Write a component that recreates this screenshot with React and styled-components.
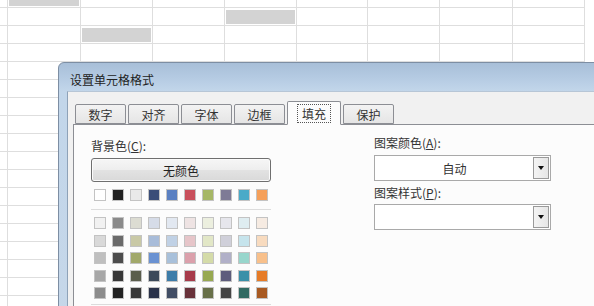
import React from 'react'
import styled, { createGlobalStyle } from 'styled-components'

const GlobalStyle = createGlobalStyle`
  html, body {
    margin: 0;
    padding: 0;
    background: #ffffff;
    overflow: hidden;
  }
  body {
    font-family: "Noto Sans CJK SC", "Liberation Sans", sans-serif;
    font-size: 12px;
    color: #333;
  }
`

const Page = styled.div`
  position: relative;
  width: 594px;
  height: 306px;
  overflow: hidden;
`

const Sheet = styled.div`
  display: grid;
  grid-template-columns: 8px 73px 72px 72px 72px 71px 72px 73px 72px;
  grid-auto-rows: 18px;
  margin-top: -10px;
`

const Cell = styled.div`
  box-sizing: border-box;
  border-right: 1px solid #dedede;
  border-bottom: 1px solid #dedede;
  padding: 2px 1px 1px 1px;
  background: ${p => (p.$selected ? '#d3d3d3' : 'transparent')};
  background-clip: content-box;
`

const Dialog = styled.div`
  position: absolute;
  left: 58px;
  top: 62px;
  width: 600px;
  height: 280px;
  box-sizing: border-box;
  border: 1px solid #7d8ea3;
  border-radius: 6px 6px 0 0;
  background: linear-gradient(#a8bfd8 0px, #b4cae2 14px, #c2d6ea 28px, #c6d7e9 100%);
  padding: 0 0 0 8px;
  display: flex;
  flex-direction: column;
`

const TitleBar = styled.div`
  height: 28px;
  box-sizing: border-box;
  display: flex;
  align-items: center;
  padding: 4px 0 0 3px;
  color: #222;
  font-size: 12px;
`

const Body = styled.div`
  flex: 1;
  background: #f1f1f1;
  border-left: 1px solid #8ea2b8;
  border-top: 1px solid #b7c6d6;
  padding: 8px 0 0 5px;
`

const TabRow = styled.div`
  display: flex;
  align-items: flex-end;
  gap: 2px;
  padding-left: 2px;
  height: 24px;
  position: relative;
  z-index: 1;
`

const Tab = styled.div`
  box-sizing: border-box;
  width: ${p => (p.$active ? '54px' : '51px')};
  height: ${p => (p.$active ? '24px' : '20px')};
  display: flex;
  align-items: center;
  justify-content: center;
  padding-top: 1px;
  border: 1px solid #8c8e94;
  border-bottom: ${p => (p.$active ? '1px solid #fcfcfc' : '1px solid #8c8e94')};
  border-radius: 2px 2px 0 0;
  background: ${p => (p.$active ? '#fcfcfc' : 'linear-gradient(#f3f3f3, #e5e5e5)')};
  color: #333;
  font-size: 12px;
  margin-bottom: ${p => (p.$active ? '-1px' : '0')};
`

const FocusText = styled.span`
  outline: 1px dotted #555;
  outline-offset: 1px;
  padding: 0 3px;
  line-height: 15px;
`

const Panel = styled.div`
  height: 200px;
  background: #fcfcfc;
  border: 1px solid #8c8e94;
  border-right: none;
  display: flex;
  padding: 13px 0 0 17px;
`

const LeftColumn = styled.div`
  width: 180px;
  display: flex;
  flex-direction: column;
`

const RightColumn = styled.div`
  width: 177px;
  margin-left: 103px;
  margin-top: -3px;
  display: flex;
  flex-direction: column;
`

const Label = styled.div`
  line-height: 16px;
  font-size: 12px;
  color: #333;
  margin-top: ${p => p.$gap || 0}px;

  u {
    text-decoration: underline;
    text-underline-offset: 1px;
  }
`

const NoColorButton = styled.div`
  margin-top: 4px;
  height: 24px;
  box-sizing: border-box;
  border: 1px solid #6f6f6f;
  border-radius: 3px;
  background: linear-gradient(#f6f6f6 0%, #eeeeee 48%, #e2e2e2 52%, #d9d9d9 100%);
  box-shadow: inset 0 0 0 1px #fbfbfb;
  display: flex;
  align-items: center;
  justify-content: center;
  color: #222;
`

const SwatchRow = styled.div`
  display: grid;
  grid-template-columns: repeat(10, 12px);
  column-gap: 6px;
  margin: 7px 0 0 3px;
`

const SwatchGrid = styled.div`
  display: grid;
  grid-template-columns: repeat(10, 12px);
  grid-auto-rows: 12px;
  column-gap: 6px;
  row-gap: 5.5px;
  margin: 7px 0 0 3px;
`

const Swatch = styled.div`
  box-sizing: border-box;
  width: 12px;
  height: 12px;
  border: 1px solid #c3c3c3;
  background: ${p => p.$color};
`

const Separator = styled.div`
  height: 1px;
  background: #dcdcdc;
  margin-top: ${p => p.$gap}px;
`

const Dropdown = styled.div`
  margin-top: ${p => p.$gap}px;
  height: 26px;
  box-sizing: border-box;
  border: 1px solid #a9a9a9;
  background: #fff;
  display: flex;
  padding: 1px;
`

const DropdownValue = styled.div`
  flex: 1;
  display: flex;
  align-items: center;
  justify-content: center;
  color: #333;
`

const ArrowButton = styled.div`
  width: 16px;
  box-sizing: border-box;
  border: 1px solid #9a9a9a;
  background: linear-gradient(90deg, #f4f4f4, #e6e6e6);
  display: flex;
  align-items: center;
  justify-content: center;
`

const Arrow = styled.div`
  width: 0;
  height: 0;
  border-left: 3.5px solid transparent;
  border-right: 3.5px solid transparent;
  border-top: 4px solid #111;
`

const tabs = ['数字', '对齐', '字体', '边框', '填充', '保护']

const themeRow = ['#ffffff', '#222222', '#e9e9e9', '#3a4d78', '#5a80c2', '#c9505c', '#a6b766', '#7e7b96', '#4aaac8', '#f5a05a']

const tintRows = [
  ['#f1f1f1', '#8a8a8a', '#dcdcd2', '#d6dce8', '#e2e8f1', '#eee3e3', '#ecefdf', '#e6e6ec', '#dfedf1', '#f6ebe2'],
  ['#d9d9d9', '#6a6a6a', '#c9c9a6', '#a8bcd9', '#c0d1e5', '#e6c5c9', '#e2e7c7', '#d0d0da', '#c6e4ec', '#f8dbbf'],
  ['#bfbfbf', '#4c4c4c', '#a1a86a', '#6a92d2', '#a8c0da', '#dba0ab', '#d4dba8', '#b1b0c8', '#98d6cc', '#f8c08b'],
  ['#a7a7a7', '#383838', '#5a5d4c', '#3c4959', '#3d7ca8', '#a63a49', '#97a851', '#5d5c7c', '#3a90a8', '#e67c28'],
  ['#8c8c8c', '#222222', '#383838', '#2a3249', '#414d64', '#683139', '#687049', '#454545', '#316a62', '#a85a22'],
]

const selectedCells = ['0-1', '1-4', '2-2']

export default function App() {
  const rows = Array.from({ length: 18 }, (_, r) => r)
  const cols = Array.from({ length: 9 }, (_, c) => c)

  return (
    <>
      <GlobalStyle />
      <Page>
        <Sheet>
          {rows.map(r =>
            cols.map(c => (
              <Cell key={`${r}-${c}`} $selected={selectedCells.includes(`${r}-${c}`)} />
            ))
          )}
        </Sheet>

        <Dialog>
          <TitleBar>设置单元格格式</TitleBar>
          <Body>
            <TabRow>
              {tabs.map(t => (
                <Tab key={t} $active={t === '填充'}>
                  {t === '填充' ? <FocusText>{t}</FocusText> : t}
                </Tab>
              ))}
            </TabRow>
            <Panel>
              <LeftColumn>
                <Label>背景色(<u>C</u>):</Label>
                <NoColorButton>无颜色</NoColorButton>
                <SwatchRow>
                  {themeRow.map((c, i) => (
                    <Swatch key={i} $color={c} />
                  ))}
                </SwatchRow>
                <Separator $gap={8} />
                <SwatchGrid>
                  {tintRows.flat().map((c, i) => (
                    <Swatch key={i} $color={c} />
                  ))}
                </SwatchGrid>
                <Separator $gap={5} />
              </LeftColumn>

              <RightColumn>
                <Label>图案颜色(<u>A</u>):</Label>
                <Dropdown $gap={4}>
                  <DropdownValue>自动</DropdownValue>
                  <ArrowButton><Arrow /></ArrowButton>
                </Dropdown>
                <Label $gap={4}>图案样式(<u>P</u>):</Label>
                <Dropdown $gap={3}>
                  <DropdownValue />
                  <ArrowButton><Arrow /></ArrowButton>
                </Dropdown>
              </RightColumn>
            </Panel>
          </Body>
        </Dialog>
      </Page>
    </>
  )
}
